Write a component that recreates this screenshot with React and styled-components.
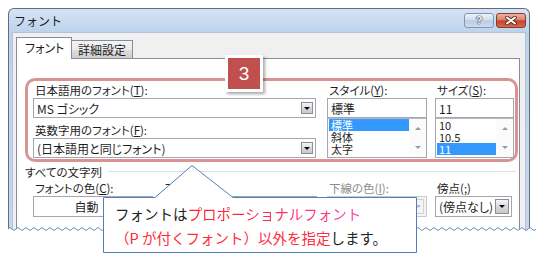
import React from 'react'
import styled, { createGlobalStyle } from 'styled-components'

const GlobalStyle = createGlobalStyle`
    html, body {
        margin: 0;
        padding: 0;
        background: #fff;
    }
    body {
        font-family: "Noto Sans CJK JP", "Noto Sans", sans-serif;
        color: #1e1e1e;
    }
`

const Page = styled.div`
    position: relative;
    width: 544px;
    height: 260px;
    padding: 8px 0 0 8px;
    box-sizing: border-box;
    overflow: hidden;
`

const Window = styled.div`
    width: 522px;
    height: 224px;
    box-sizing: border-box;
    border: 1px solid #5f6f83;
    border-bottom: none;
    border-radius: 6px 6px 0 0;
    background: linear-gradient(#d6e3f3, #bcd2ec 24px, #c6d7ec);
    overflow: hidden;
    display: flex;
    flex-direction: column;
`

const TitleBar = styled.div`
    height: 23px;
    flex: none;
    display: flex;
    align-items: center;
    padding: 0 3px 0 5px;
`

const Title = styled.span`
    flex: 1;
    font-size: 12px;
    line-height: 14px;
    color: #1c1c1c;
`

const CaptionButtons = styled.div`
    display: flex;
    gap: 2px;
`

const CaptionButton = styled.span`
    width: 30px;
    height: 15px;
    box-sizing: border-box;
    border-radius: 3px;
    display: flex;
    align-items: center;
    justify-content: center;
    border: 1px solid ${p => p.$close ? '#8d3a2d' : '#8195b1'};
    background: ${p => p.$close
        ? 'linear-gradient(#eeb1a3, #dc8470 45%, #c4432d 52%, #d46a52)'
        : 'linear-gradient(#eef3fa, #d0ddee 45%, #b8cce5 52%, #cddcee)'};
    font: bold 11px/1 "Liberation Sans", sans-serif;
    color: #fff;
    text-shadow: 0 0 1px #25344c, 0 0 1px #25344c, 0 0 1px #25344c;
`

const Client = styled.div`
    flex: 1;
    display: flex;
    flex-direction: column;
    margin: 0 3px;
    border: 1px solid #b3c2d4;
    border-bottom: none;
    background: #f0f0f0;
    padding: 4px 5px 0 3px;
`

const TabRow = styled.div`
    display: flex;
    align-items: flex-end;
    height: 22px;
    position: relative;
    z-index: 1;
`

const Tab = styled.div`
    width: ${p => p.$w}px;
    box-sizing: border-box;
    height: ${p => p.$active ? 22 : 18}px;
    margin-bottom: ${p => p.$active ? 0 : 1}px;
    margin-left: ${p => p.$active ? 0 : -1}px;
    border: 1px solid #898c95;
    border-bottom: none;
    background: ${p => p.$active ? '#fff' : 'linear-gradient(#f3f3f3, #ebebeb 50%, #dddddd 51%, #cfcfcf)'};
    padding-left: ${p => p.$active ? 8 : 6}px;
    font-size: 12px;
    line-height: ${p => p.$active ? 20 : 17}px;
    font-feature-settings: "palt";
`

const Panel = styled.div`
    flex: 1;
    position: relative;
    margin-top: -1px;
    background: #fff;
    border: 1px solid #898c95;
    padding: 19px 1px 0 8px;
`

const Badge = styled.div`
    position: absolute;
    left: 208px;
    top: -4px;
    width: 32px;
    height: 31px;
    border: 3px solid #fff;
    background: #c0504d;
    box-shadow: 2px 2px 3px rgba(0, 0, 0, 0.35);
    color: #fff;
    font: 19px/31px "Liberation Sans", sans-serif;
    text-align: center;
`

const Highlight = styled.div`
    display: flex;
    border: 3px solid #d99391;
    border-radius: 10px;
    padding: 2px 1px 1px 5px;
`

const Row = styled.div`
    display: flex;
`

const Column = styled.div`
    display: flex;
    flex-direction: column;
    width: ${p => p.$w}px;
    margin-left: ${p => p.$ml || 0}px;
`

const Label = styled.div`
    height: 15px;
    margin-top: ${p => p.$mt || 0}px;
    padding-left: 2px;
    font-size: 11.5px;
    line-height: 15px;
    white-space: nowrap;
    font-feature-settings: "palt";
    color: ${p => p.$disabled ? '#8d8d8d' : '#1e1e1e'};
`

const Key = styled.span`
    text-decoration: underline;
`

const Combo = styled.div`
    display: flex;
    align-items: center;
    box-sizing: border-box;
    height: ${p => p.$h || 20}px;
    border: 1px solid ${p => p.$disabled ? '#cacaca' : '#a3a8b0'};
    background: ${p => p.$disabled ? '#f4f4f4' : '#fff'};
    padding: 0 2px 0 3px;
    font-size: 12px;
`

const ComboText = styled.span`
    flex: 1;
    white-space: nowrap;
    overflow: hidden;
    text-align: ${p => p.$center ? 'center' : 'left'};
    font-feature-settings: "palt";
`

const DropButton = styled.span`
    flex: none;
    width: ${p => p.$w}px;
    height: ${p => p.$h}px;
    box-sizing: border-box;
    display: flex;
    align-items: center;
    justify-content: center;
    border: 1px solid ${p => p.$disabled ? '#d2d2d2' : '#8a8f96'};
    background: ${p => p.$disabled ? '#f4f4f4' : 'linear-gradient(#f6f6f6, #dadada 50%, #c9c9c9)'};

    &::after {
        content: '';
        border-left: 3px solid transparent;
        border-right: 3px solid transparent;
        border-top: 3px solid ${p => p.$disabled ? '#b8b8b8' : '#000'};
    }
`

const ListBox = styled.div`
    display: flex;
    height: 40px;
    box-sizing: border-box;
    border: 1px solid #a3a8b0;
    border-top-color: #b6bac0;
    background: #fff;
`

const ListItems = styled.div`
    flex: 1;
    padding: 0 0 0 1px;
    overflow: hidden;
`

const ListItem = styled.div`
    height: 12px;
    padding-left: 2px;
    font-size: 11px;
    line-height: 12px;
    background: ${p => p.$selected ? '#3399ff' : 'transparent'};
    color: ${p => p.$selected ? '#fff' : '#1e1e1e'};
`

const ScrollBar = styled.div`
    width: 17px;
    flex: none;
    display: flex;
    flex-direction: column;
    justify-content: space-between;
    align-items: center;
    padding: 8px 0 8px;
    box-sizing: border-box;
    background: #fbfbfb;
`

const Arrow = styled.span`
    border-left: 3px solid transparent;
    border-right: 3px solid transparent;
    ${p => p.$up ? 'border-bottom' : 'border-top'}: 3px solid #9a9a9a;
`

const GroupHeader = styled.div`
    display: flex;
    align-items: center;
    height: 15px;
    margin-top: 2px;
    font-size: 11.5px;
    font-feature-settings: "palt";
    white-space: nowrap;
`

const GroupLine = styled.div`
    flex: 1;
    height: 1px;
    margin: 0 2px 0 6px;
    background: #d5dfe5;
`

const Callout = styled.div`
    position: absolute;
    left: 103px;
    top: 165px;
    width: 314px;
    height: 88px;
    box-sizing: border-box;
    padding: 37px 0 0 12px;
    font-size: 14.5px;
    line-height: 24px;
    color: #222;
    white-space: nowrap;

    & > svg {
        position: absolute;
        left: 0;
        top: 0;
    }
`

const CalloutText = styled.div`
    position: relative;
`

const Red = styled.span`
    color: #ff2a3c;
`

const Pink = styled.span`
    background: linear-gradient(90deg, #ff2020, #ff3c9c);
    -webkit-background-clip: text;
    background-clip: text;
    color: transparent;
`

const Tear = styled.svg`
    position: absolute;
    left: 0;
    top: 224px;
`

const wavePath = () => {
    let d = 'M 8 5'
    for (let x = 8; x < 530; x += 8)
        d += ` q 2 -3 4 0 q 2 3 4 0`
    return d
}

const App = () => {
    const wave = wavePath()
    return (
        <Page>
            <GlobalStyle />
            <Window>
                <TitleBar>
                    <Title>フォント</Title>
                    <CaptionButtons>
                        <CaptionButton>?</CaptionButton>
                        <CaptionButton $close>
                            <svg width="12" height="9" viewBox="0 0 12 9">
                                <path d="M2 1.5 L10 7.5 M10 1.5 L2 7.5" stroke="#5a2018" strokeWidth="3.6" strokeLinecap="round" />
                                <path d="M2 1.5 L10 7.5 M10 1.5 L2 7.5" stroke="#fff" strokeWidth="2" strokeLinecap="round" />
                            </svg>
                        </CaptionButton>
                    </CaptionButtons>
                </TitleBar>
                <Client>
                    <TabRow>
                        <Tab $active $w={56}>フォント</Tab>
                        <Tab $w={62}>詳細設定</Tab>
                    </TabRow>
                    <Panel>
                        <Badge>3</Badge>
                        <Highlight>
                            <Column $w={283}>
                                <Label>日本語用のフォント(<Key>T</Key>):</Label>
                                <Combo>
                                    <ComboText>MS ゴシック</ComboText>
                                    <DropButton $w={12} $h={12} />
                                </Combo>
                                <Label $mt={5}>英数字用のフォント(<Key>F</Key>):</Label>
                                <Combo>
                                    <ComboText>(日本語用と同じフォント)</ComboText>
                                    <DropButton $w={12} $h={12} />
                                </Combo>
                            </Column>
                            <Column $w={100} $ml={11}>
                                <Label>スタイル(<Key>Y</Key>):</Label>
                                <Combo>
                                    <ComboText>標準</ComboText>
                                </Combo>
                                <ListBox>
                                    <ListItems>
                                        <ListItem $selected>標準</ListItem>
                                        <ListItem>斜体</ListItem>
                                        <ListItem>太字</ListItem>
                                    </ListItems>
                                    <ScrollBar>
                                        <Arrow $up />
                                        <Arrow />
                                    </ScrollBar>
                                </ListBox>
                            </Column>
                            <Column $w={79} $ml={8}>
                                <Label>サイズ(<Key>S</Key>):</Label>
                                <Combo>
                                    <ComboText>11</ComboText>
                                </Combo>
                                <ListBox>
                                    <ListItems>
                                        <ListItem>10</ListItem>
                                        <ListItem>10.5</ListItem>
                                        <ListItem $selected>11</ListItem>
                                    </ListItems>
                                    <ScrollBar>
                                        <Arrow $up />
                                        <Arrow />
                                    </ScrollBar>
                                </ListBox>
                            </Column>
                        </Highlight>
                        <GroupHeader>
                            すべての文字列
                            <GroupLine />
                        </GroupHeader>
                        <Row>
                            <Column $w={120} $ml={8}>
                                <Label $mt={2}>フォントの色(<Key>C</Key>):</Label>
                                <Combo $h={21}>
                                    <ComboText $center>自動</ComboText>
                                    <DropButton $w={14} $h={15} />
                                </Combo>
                            </Column>
                            <Column $w={154} $ml={10}>
                                <Label $mt={2}>下線(<Key>U</Key>):</Label>
                                <Combo $h={21}>
                                    <ComboText>(下線なし)</ComboText>
                                    <DropButton $w={14} $h={15} />
                                </Combo>
                            </Column>
                            <Column $w={100} $ml={10}>
                                <Label $mt={2} $disabled>下線の色(<Key>I</Key>):</Label>
                                <Combo $h={21} $disabled>
                                    <ComboText />
                                    <DropButton $w={12} $h={15} $disabled />
                                </Combo>
                            </Column>
                            <Column $w={77} $ml={8}>
                                <Label $mt={2}>傍点(<Key>;</Key>)</Label>
                                <Combo $h={21}>
                                    <ComboText>(傍点なし)</ComboText>
                                    <DropButton $w={14} $h={15} />
                                </Combo>
                            </Column>
                        </Row>
                    </Panel>
                </Client>
            </Window>
            <Tear width="544" height="36" viewBox="0 0 544 36">
                <path d={`${wave} L 530 36 L 8 36 Z`} fill="#fff" />
                <rect x="0" y="8" width="544" height="28" fill="#fff" />
                <path d={wave} fill="none" stroke="#6f8fb7" strokeWidth="1" />
            </Tear>
            <Callout>
                <svg width="314" height="88" viewBox="0 0 314 88">
                    <path d="M0.5 32.5 H52 L89 0.5 L130 32.5 H313.5 V87.5 H0.5 Z" fill="#fff" stroke="#4f7fc0" strokeWidth="1" />
                </svg>
                <CalloutText>
                    フォントは<Pink>プロポーショナルフォント</Pink>
                    <br />
                    <Red>（P が付くフォント）以外を指定</Red>します。
                </CalloutText>
            </Callout>
        </Page>
    )
}

export default App
